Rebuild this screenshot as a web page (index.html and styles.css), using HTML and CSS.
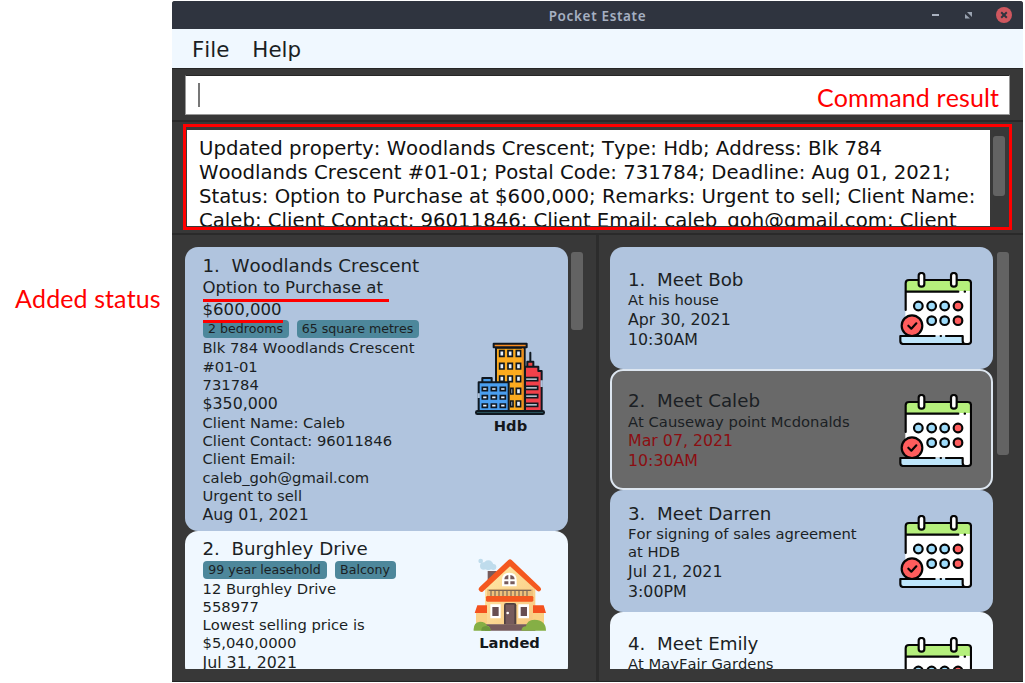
FILE: index.html
```html
<!DOCTYPE html>
<html lang="en">
<head>
<meta charset="utf-8">
<title>Pocket Estate</title>
<link rel="stylesheet" href="styles.css">
</head>
<body>
<svg class="defs" width="0" height="0">
  <symbol id="calendar" viewBox="27 21 219 219">
    <path d="M46 52q0-8 8-8h182q8 0 8 8v178q0 8-9 8h-16l-4-26H46z" fill="#fff"/>
    <path d="M47 54q0-9 9-9h178q9 0 9 9v24H47z" fill="#b5ef7c"/>
    <path d="M31 212h188v25H39q-8 0-8-8z" fill="#bfe6fb"/>
    <g fill="none" stroke="#050505" stroke-width="6.5" stroke-linecap="round" stroke-linejoin="round">
      <path d="M47 135V55q0-10 10-10h176q10 0 10 10v174q0 8-9 8H40q-9 0-9-9v-15h103M168 213h50v14q0 10 9 10M47 80h158M224 80h1M152 213h1"/>
      <rect x="86" y="24" width="17" height="41" rx="8" fill="#fff"/>
      <rect x="183" y="24" width="17" height="41" rx="8" fill="#fff"/>
      <g fill="#9edcfb"><circle cx="85" cy="123" r="13"/><circle cx="125" cy="123" r="13"/><circle cx="164" cy="123" r="13"/><circle cx="125" cy="167" r="13"/><circle cx="164" cy="167" r="13"/></g>
      <g fill="#ff5d5d"><circle cx="204" cy="123" r="13"/><circle cx="204" cy="167" r="13"/><circle cx="66" cy="182" r="31"/></g>
      <path d="M55 182l9 9 15-16"/>
    </g>
  </symbol>
</svg>

<main class="window">
  <header class="titlebar">
    <span class="title">Pocket Estate</span>
    <svg class="controls" viewBox="0 0 90 28" width="90" height="28">
      <path d="M6 14h7" stroke="#aab2c0" stroke-width="2"/>
      <path d="M41 11h5v5zM39 13v4.500h5z" fill="#9aa3b1"/>
      <circle cx="78" cy="14" r="8" fill="#cf575f"/>
      <path d="M75.200 11.200l5.600 5.600m0-5.600l-5.600 5.600" stroke="#2f343f" stroke-width="2"/>
    </svg>
  </header>
  <nav class="menubar"><span>File</span><span>Help</span></nav>
  <section class="command"><div class="input"><i class="caret"></i><span class="note">Command result</span></div></section>
  <section class="result">
    <div class="highlight">
      <div class="message">Updated property: Woodlands Crescent; Type: Hdb; Address: Blk 784<br>Woodlands Crescent #01-01; Postal Code: 731784; Deadline: Aug 01, 2021;<br>Status: Option to Purchase at $600,000; Remarks: Urgent to sell; Client Name:<br>Caleb; Client Contact: 96011846; Client Email: caleb_goh@gmail.com; Client</div>
      <i class="thumb"></i>
    </div>
  </section>
  <div class="lists">
    <section class="pane properties">
      <div class="list">
        <article class="card blue property-a">
          <div class="details">
            <h2>1.  Woodlands Crescent</h2>
            <p class="status"><span class="marked">Option to Purchase at</span></p>
            <p class="status"><span class="marked short">$600,000</span></p>
            <div class="tags"><span class="w1">2 bedrooms</span><span class="w2">65 square metres</span></div>
            <p>Blk 784 Woodlands Crescent</p>
            <p>#01-01</p>
            <p>731784</p>
            <p class="big">$350,000</p>
            <p>Client Name: Caleb</p>
            <p>Client Contact: 96011846</p>
            <p>Client Email:</p>
            <p>caleb_goh@gmail.com</p>
            <p>Urgent to sell</p>
            <p class="big">Aug 01, 2021</p>
          </div>
          <figure>
            <svg viewBox="27 21 219 219" width="73" height="73">
              <g stroke="#101820" stroke-width="6" stroke-linejoin="round" stroke-linecap="round">
                <path d="M196 53v26M187 97V80h18v17" fill="#f04444"/>
                <path d="M180 108V95h40v13h10v120h-50z" fill="#f3404a"/>
                <path d="M93 38h86v190H93z" fill="#fcab1f"/>
                <rect x="86" y="26" width="99" height="11" fill="#f88b20"/>
                <path d="M52 141v-12h28v12" fill="#4a9ce8"/>
                <path d="M41 142h90v86H41z" fill="#4a9ff0"/>
                <rect x="33" y="228" width="204" height="9" rx="4" fill="#28515a"/>
              </g>
              <g fill="#e9f3ff" stroke="#101820" stroke-width="5">
                <path d="M104 47h13v17h-13zM129 47h13v17h-13zM154 47h13v17h-13zM104 85h13v17h-13zM129 85h13v17h-13zM154 85h13v17h-13zM104 123h13v16h-13zM129 123h13v17h-13zM154 123h13v17h-13zM154 160h13v17h-13zM137 160h7v17h-7zM154 198h13v17h-13zM137 198h7v17h-7z"/>
                <path d="M52 157h15v10H52zM79 157h15v10H79zM106 157h15v10h-15zM52 182h15v10H52zM79 182h15v10H79zM106 182h15v10h-15zM52 207h15v10H52zM79 207h15v10H79zM106 207h15v10h-15z"/>
                <path d="M181 128h37v9h-37zM181 154h37v9h-37zM181 179h37v9h-37zM181 205h37v9h-37z"/>
              </g>
              <path d="M173 40v185" stroke="#ef8d20" stroke-width="5"/>
              <path d="M230 136v20M41 189v-14" stroke="#b0c4de" stroke-width="7"/>
            </svg>
            <figcaption>Hdb</figcaption>
          </figure>
        </article>
        <article class="card pale property-b">
          <div class="details">
            <h2>2.  Burghley Drive</h2>
            <div class="tags"><span class="w3">99 year leasehold</span><span class="w4">Balcony</span></div>
            <p>12 Burghley Drive</p>
            <p>558977</p>
            <p>Lowest selling price is</p>
            <p>$5,040,0000</p>
            <p class="big">Jul 31, 2021</p>
          </div>
          <figure>
            <svg viewBox="25 24 222 222" width="74" height="74">
              <defs><linearGradient id="wall" x2="1" y2="1"><stop stop-color="#ffe9a9"/><stop offset="1" stop-color="#f8c77e"/></linearGradient></defs>
              <g fill="#bfdcec"><circle cx="48" cy="33" r="7"/><circle cx="57" cy="48" r="11"/><circle cx="71" cy="46" r="15"/><circle cx="86" cy="51" r="9"/></g>
              <path d="M69 63h27v38H69z" fill="#765b5c"/>
              <path d="M136 39l76 78v107H61V117z" fill="url(#wall)"/>
              <path d="M34 186h33v39H34zM204 186h34v39h-34z" fill="#fbd184"/>
              <path d="M38 166h29v23H30zM205 166h32l7 23h-39z" fill="#f4511e"/>
              <path d="M67 117q0-1 69-1t69 1v22H67z" fill="#efc27c"/>
              <path d="M72 121h128M79 121v17m12-17v17m12-17v17m12-17v17m12-17v17m12-17v17m12-17v17m12-17v17m12-17v17m12-17v17" stroke="#7c6656" stroke-width="3.500"/>
              <path d="M42 119q-1-4 4-9l85-80q5-4 10 0l84 80q5 5 4 9-4 9-12 3L136 49l-82 76q-7 3-12-6z" fill="#f4581f"/>
              <rect x="64" y="138" width="142" height="17" rx="4" fill="#f4581f"/>
              <path d="M112 109V90q0-22 22-22t22 22v19z" fill="#fff"/>
              <path d="M119 88q1-12 12-13v13zM137 75q12 1 13 13h-13zM119 94h12v9h-12zM137 94h13v9h-13z" fill="#765b5c"/>
              <path d="M61 223h151v19H61z" fill="#765b5c"/>
              <path d="M118 223v-57q0-7 7-7h23q7 0 7 7v57z" fill="#4f4040"/>
              <path d="M123 223v-59h26v59z" fill="#765b5c"/><circle cx="129" cy="189" r="4" fill="#fff"/>
              <path d="M77 163h31v42H77zM161 163h32v42h-32z" fill="#fff"/>
              <path d="M83 171h19v27H83zM168 171h19v27h-19z" fill="#684e51"/>
              <path d="M27 242q-2-24 19-27 17 0 21 12 10 0 11 15zM170 242q2-13 14-13 3-19 25-20 35 1 35 33z" fill="#85af45"/>
              <path d="M50 242q-1-13 14-14 12 1 14 14z" fill="#6c983c"/>
            </svg>
            <figcaption>Landed</figcaption>
          </figure>
        </article>
      </div>
      <i class="thumb"></i>
    </section>
    <section class="pane meetings">
      <div class="list">
        <article class="card blue meeting"><div class="details"><h2>1.  Meet Bob</h2><p>At his house</p><p class="big">Apr 30, 2021</p><p class="big">10:30AM</p></div><svg width="73" height="73"><use href="#calendar"/></svg></article>
        <article class="card gray meeting"><div class="details"><h2>2.  Meet Caleb</h2><p>At Causeway point Mcdonalds</p><p class="big late">Mar 07, 2021</p><p class="big late">10:30AM</p></div><svg width="73" height="73"><use href="#calendar"/></svg></article>
        <article class="card blue meeting"><div class="details"><h2>3.  Meet Darren</h2><p>For signing of sales agreement</p><p>at HDB</p><p class="big">Jul 21, 2021</p><p class="big">3:00PM</p></div><svg width="73" height="73"><use href="#calendar"/></svg></article>
        <article class="card pale meeting"><div class="details partial"><h2>4.  Meet Emily</h2><p>At MayFair Gardens</p></div><svg width="73" height="73"><use href="#calendar"/></svg></article>
      </div>
      <i class="thumb"></i>
    </section>
  </div>
</main>
<aside class="note side">Added status</aside>
</body>
</html>
```

FILE: styles.css
```css
* { box-sizing: border-box; }
body {
  margin: 0;
  width: 1025px;
  height: 683px;
  overflow: hidden;
  background: #fff;
  color: #1b1f24;
  font-family: "DejaVu Sans", sans-serif;
  font-kerning: none;
}
h2, p, figure { margin: 0; }
.defs { position: absolute; }

.window {
  display: flex;
  flex-direction: column;
  width: 851px;
  height: 681px;
  margin: 1px 0 0 172px;
  background: #383838;
  border-radius: 3px 3px 0 0;
  overflow: hidden;
}
.titlebar {
  position: relative;
  flex: none;
  height: 28px;
  background: #2f343f;
  text-align: center;
}
.title {
  font: 600 13.5px/30px "Noto Sans", sans-serif;
  letter-spacing: 0.65px;
  color: #a5b0c2;
}
.controls { position: absolute; top: 0; right: 7px; }
.menubar {
  flex: none;
  display: flex;
  gap: 23px;
  height: 39px;
  padding-left: 20px;
  background: #f0f8ff;
  font-size: 21.4px;
  line-height: 41px;
}
.command {
  flex: none;
  height: 54px;
  padding: 6px 13px 0;
  border-top: 1px solid #262626;
  border-bottom: 2px solid #292929;
}
.input {
  display: flex;
  align-items: center;
  height: 40px;
  padding: 0 10px 0 12px;
  background: #fff;
  border: 1px solid #999;
  border-top-color: #262626;
}
.caret { width: 2px; height: 24px; margin-bottom: 1px; background: #777; }
.note {
  font-family: Lato, sans-serif;
  font-size: 25px;
  line-height: 30px;
  letter-spacing: 0.1px;
  color: #f00;
  white-space: nowrap;
}
.input .note { margin: 3px 0 0 auto; }
.side { position: absolute; left: 15px; top: 283px; }
.result {
  flex: none;
  height: 113px;
  padding: 2px 11px 0 11px;
  border-bottom: 2px solid #2a2a2a;
}
.highlight {
  display: flex;
  height: 106px;
  padding: 3px 4px 2px 1px;
  border: 3px solid #f00;
}
.message {
  width: 803px;
  height: 96px;
  padding: 7px 0 0 12px;
  overflow: hidden;
  background: #fff;
  color: #111;
  font-size: 19.7px;
  line-height: 24px;
  white-space: nowrap;
}
.thumb { display: block; width: 12px; border-radius: 3px; background: #636363; }
.highlight .thumb { height: 60px; margin: 6px 0 0 3px; }

.lists {
  flex: 1;
  display: flex;
  border-bottom: 1px solid #252525;
}
.pane { display: flex; gap: 3px; padding: 12px 0 12px; }
.properties { width: 427px; padding-left: 12.500px; border-right: 3px solid #2c2c2c; }
.meetings { gap: 4px; padding-left: 11px; }
.list { width: 383px; height: 422px; overflow: hidden; }
.pane .thumb { margin-top: 5px; }
.properties .thumb { height: 78px; }
.meetings .thumb { height: 203px; }

.card {
  display: flex;
  justify-content: space-between;
  align-items: center;
  padding: 0 21px 0 18px;
  border-radius: 13px;
}
.blue { background: #b0c4de; }
.pale { background: #f0f8ff; }
.gray { background: #696969; border: 2px solid #dde6f0; }
.card.gray { padding: 0 19px 0 16px; }
.property-a { height: 283.500px; padding-right: 20px; }
.property-b { height: 148px; }
.properties .details { padding-top: 2px; }
.meeting { height: 121.500px; }
.meeting .details { padding-top: 3px; }
.meeting .partial { padding-bottom: 41px; }
.meeting svg { margin-top: 2px; }
.details { font-size: 14.75px; }
.details p, .details h2 { white-space: pre; }
.details p { height: 18.2px; line-height: 18.2px; }
.details h2 { height: 22.400px; font-size: 18.25px; font-weight: 400; line-height: 22.400px; }
.details .status { height: 21.700px; font-size: 16.6px; line-height: 22px; }
.details .big { height: 20px; font-size: 15.8px; line-height: 20px; }
.details .late { color: #8b0e12; }
.marked { position: relative; }
.marked::after {
  content: "";
  position: absolute;
  left: 0;
  bottom: -4.500px;
  width: 186px;
  height: 3px;
  background: #f00;
}
.marked.short::after { width: 80px; }
.tags { display: flex; gap: 8px; height: 18.500px; margin-bottom: 0.500px; }
.tags span {
  height: 18px;
  border-radius: 4px;
  background: #4d879b;
  font-size: 12.6px;
  line-height: 18px;
  text-align: center;
}
.w1 { width: 86px; }
.w2 { width: 122px; }
.w3 { width: 124px; }
.w4 { width: 61px; }
figure { width: 74px; padding-top: 1px; text-align: center; }
figure svg { display: block; }
figcaption { height: 21px; font-size: 14.7px; font-weight: 700; line-height: 22px; color: #14181c; }
```
